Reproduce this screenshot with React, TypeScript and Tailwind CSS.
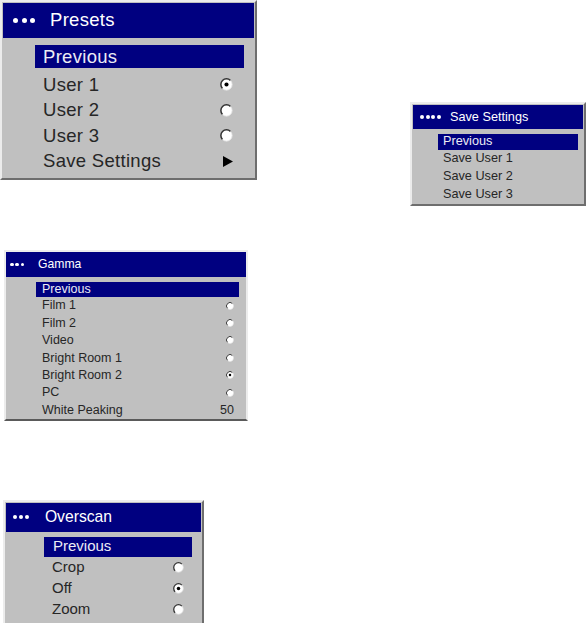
import React from 'react'

// 行の右側に出すマーク
type Mark = 'on' | 'off' | 'arrow' | string | undefined
type Row = { label: string; mark?: Mark }

const presets: Row[] = [
  { label: 'User 1', mark: 'on' },
  { label: 'User 2', mark: 'off' },
  { label: 'User 3', mark: 'off' },
  { label: 'Save Settings', mark: 'arrow' },
]

const saveRows: Row[] = [{ label: 'Save User 1' }, { label: 'Save User 2' }, { label: 'Save User 3' }]

const gamma: Row[] = [
  { label: 'Film 1', mark: 'off' },
  { label: 'Film 2', mark: 'off' },
  { label: 'Video', mark: 'off' },
  { label: 'Bright Room 1', mark: 'off' },
  { label: 'Bright Room 2', mark: 'on' },
  { label: 'PC', mark: 'off' },
  { label: 'White Peaking', mark: '50' },
]

const overscan: Row[] = [
  { label: 'Crop', mark: 'off' },
  { label: 'Off', mark: 'on' },
  { label: 'Zoom', mark: 'off' },
]

function Radio({ on, className }: { on: boolean; className: string }) {
  return (
    <svg viewBox="0 0 12 12" className={className}>
      <circle cx="6" cy="6" r="5.2" fill="#fff" />
      <path d="M2.32 9.68A5.2 5.2 0 0 1 9.68 2.32" fill="none" stroke="#333" strokeWidth="1.4" />
      <path d="M9.68 2.32A5.2 5.2 0 0 1 2.32 9.68" fill="none" stroke="#e4e4e4" strokeWidth="0.8" />
      {on && <circle cx="6" cy="6" r="1.9" fill="#000" />}
    </svg>
  )
}

function Arrow() {
  return (
    <svg viewBox="0 0 10 11" className="w-[10px] h-[11px]">
      <polygon points="0,0 10,5.5 0,11" fill="#000" />
    </svg>
  )
}

function Dots({ count, dot, gap }: { count: number; dot: string; gap: string }) {
  return (
    <span className={`flex items-center ${gap}`}>
      {Array.from({ length: count }).map((_, i) => (
        <span key={i} className={`${dot} rounded-full bg-white`} />
      ))}
    </span>
  )
}

export default function App() {
  return (
    <div className="w-[586px] h-[623px] overflow-hidden bg-white font-['Liberation_Sans',Arial,sans-serif] text-[#262626]">
      <div className="flex items-start">
        {/* Presets */}
        <div className="w-[257px] h-[180px] shrink-0 border-2 border-t-[#ececec] border-l-[#ececec] border-r-[#6e6e6e] border-b-[#6e6e6e] bg-[#c0c0c0] p-px">
          <div className="h-[35px] bg-[#000080] flex items-center pl-[10px] text-white">
            <Dots count={3} dot="size-[5px]" gap="gap-[3.5px]" />
            <span className="ml-[15px] text-[18.5px] tracking-[0.3px] leading-none">Presets</span>
          </div>
          <div className="ml-[32px] mr-[10px] mt-[7px]">
            <div className="h-[23px] bg-[#000080] flex items-center pl-[8px] text-[18.5px] tracking-[0.3px] text-[#ececf4]">
              Previous
            </div>
            <div className="mt-[4px]">
              {presets.map((r) => (
                <div key={r.label} className="h-[25.5px] flex items-center justify-between pl-[8px] pr-[11px] text-[18.5px] tracking-[0.3px]">
                  <span>{r.label}</span>
                  {r.mark === 'arrow' ? (
                    <Arrow />
                  ) : (
                    <Radio on={r.mark === 'on'} className="size-[13px]" />
                  )}
                </div>
              ))}
            </div>
          </div>
        </div>

        {/* Save Settings */}
        <div className="ml-[153px] mt-[102px] w-[176px] shrink-0 border-2 border-t-[#ececec] border-l-[#ececec] border-r-[#6e6e6e] border-b-[#6e6e6e] bg-[#c0c0c0] px-px pt-px">
          <div className="h-[24px] bg-[#000080] flex items-center pl-[7px] text-white">
            <Dots count={4} dot="size-[4px]" gap="gap-[1.5px]" />
            <span className="ml-[9.5px] text-[12.7px] leading-none">Save Settings</span>
          </div>
          <div className="ml-[25px] mr-[5px] mt-[5px]">
            <div className="h-[16px] bg-[#000080] flex items-center pl-[5px] text-[12.7px] text-[#ececf4]">Previous</div>
            {saveRows.map((r) => (
              <div key={r.label} className="h-[18px] flex items-center pl-[5px] text-[12.7px]">
                {r.label}
              </div>
            ))}
          </div>
        </div>
      </div>

      {/* Gamma */}
      <div className="ml-[4px] mt-[44px] w-[244px] border-2 border-t-[#ececec] border-l-[#ececec] border-r-[#ececec] border-b-[#5a5a5a] bg-[#c0c0c0]">
        <div className="h-[25px] bg-[#000080] flex items-center pl-[4px] text-white">
          <Dots count={3} dot="size-[3.5px]" gap="gap-[1.75px]" />
          <span className="ml-[14px] text-[12.2px] leading-none">Gamma</span>
        </div>
        <div className="ml-[30px] mr-[7px] mt-[5px]">
          <div className="h-[15px] bg-[#000080] flex items-center pl-[6px] text-[12.5px] text-[#ececf4]">Previous</div>
          {gamma.map((r) => (
            <div key={r.label} className="h-[17.4px] flex items-center justify-between pl-[6px] pr-[5px] text-[12.5px]">
              <span>{r.label}</span>
              {r.mark === 'on' || r.mark === 'off' ? (
                <Radio on={r.mark === 'on'} className="size-[8px]" />
              ) : (
                <span>{r.mark}</span>
              )}
            </div>
          ))}
        </div>
      </div>

      {/* Overscan */}
      <div className="ml-[3px] mt-[79px] w-[201px] border-2 border-t-[#ececec] border-l-[#ececec] border-r-[#6e6e6e] border-b-[#6e6e6e] bg-[#c0c0c0] p-px pb-[6px]">
        <div className="h-[29px] bg-[#000080] flex items-center pl-[7px] text-white">
          <Dots count={3} dot="size-[4.3px]" gap="gap-[1.5px]" />
          <span className="ml-[16px] text-[15.7px] leading-none">Overscan</span>
        </div>
        <div className="ml-[38px] mr-[9px] mt-[5px]">
          <div className="h-[20px] bg-[#000080] flex items-center pl-[9px] text-[15px] text-[#ececf4]">Previous</div>
          {overscan.map((r) => (
            <div key={r.label} className="h-[21px] flex items-center justify-between pl-[8px] pr-[8.5px] text-[15px]">
              <span>{r.label}</span>
              <Radio on={r.mark === 'on'} className="size-[11px]" />
            </div>
          ))}
        </div>
      </div>
    </div>
  )
}
